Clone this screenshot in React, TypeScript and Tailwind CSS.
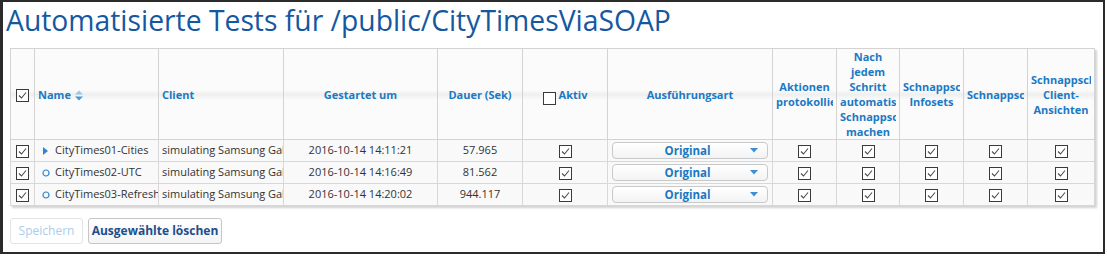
import React from 'react'

const font = { fontFamily: '"Open Sans", "Noto Sans", sans-serif' }

function Check({ checked = true }: { checked?: boolean }) {
  return (
    <svg width="13" height="13" viewBox="0 0 13 13" className="inline-block align-middle">
      <rect x="0.5" y="0.5" width="12" height="12" fill="#fff" stroke="#3a3a3a" />
      {checked && <path d="M3 6.5 L5.5 9 L10 3.5" fill="none" stroke="#4a4a4a" strokeWidth="1.1" />}
    </svg>
  )
}

function SortIcon() {
  return (
    <svg width="8" height="11" viewBox="0 0 8 11" className="inline-block ml-1 align-middle">
      <path d="M0 4.5 L4 0.5 L8 4.5 Z" fill="#9cc6e8" />
      <path d="M0 6.5 L4 10.5 L8 6.5 Z" fill="#4a97d6" />
    </svg>
  )
}

function RunSelect() {
  return (
    <div className="mx-1 flex h-[17px] items-center rounded-[4px] border border-[#c9c9c9] bg-[linear-gradient(to_bottom,#ffffff,#f3f3f3)]">
      <span className="flex-1 pl-3 text-center text-[11.5px] font-bold text-[#1a78c2]">Original</span>
      <svg width="8" height="5" viewBox="0 0 8 5" className="mr-[9px]">
        <path d="M0 0 L8 0 L4 4.5 Z" fill="#3b8fd2" />
      </svg>
    </div>
  )
}

const rows = [
  { name: 'CityTimes01-Cities', icon: 'play', start: '2016-10-14 14:11:21', dur: '57.965' },
  { name: 'CityTimes02-UTC', icon: 'circle', start: '2016-10-14 14:16:49', dur: '81.562' },
  { name: 'CityTimes03-Refresh', icon: 'circle', start: '2016-10-14 14:20:02', dur: '944.117' },
]

const widths = [24, 124, 125, 154, 85, 85, 165, 64, 63, 64, 64, 67]

const th = 'border border-[#d3d3d3] px-[3px] align-middle font-bold text-[11px] leading-[15px] text-[#1b79c4]'
const td = 'border border-[#d8d8d8] align-middle text-[11px] text-[#333] h-[22px] p-0'

function HeadText({ lines }: { lines: string[] }) {
  return (
    <div className="overflow-hidden whitespace-nowrap text-center">
      {lines.map((l, i) => (
        <div key={i}>{l}</div>
      ))}
    </div>
  )
}

export default function App() {
  return (
    <div style={font} className="h-[254px] w-[1105px] border-2 border-l-[3px] border-[#2b2b2b] bg-white pl-[7px]">
      {/* Titel */}
      <h1 className="text-[28.3px] leading-[36px] text-[#14589f] -ml-[4px]">Automatisierte Tests für /public/CityTimesViaSOAP</h1>

      {/* Tabelle */}
      <div className="mt-[10px] w-[1085px] shadow-[2px_2px_2px_rgba(0,0,0,0.18)]">
        <table className="w-[1084px] table-fixed border-collapse bg-[#fafafa]">
          <colgroup>
            {widths.map((w, i) => (
              <col key={i} style={{ width: w }} />
            ))}
          </colgroup>
          <thead>
            <tr className="h-[90px] bg-[linear-gradient(to_bottom,#fbfbfb_0%,#fbfbfb_45%,#efefef_50%,#fbfbfb_56%,#fbfbfb_100%)]">
              <th className={th + ' text-center'}><Check /></th>
              <th className={th + ' text-left'}>Name<SortIcon /></th>
              <th className={th + ' text-left'}>Client</th>
              <th className={th + ' text-center'}>Gestartet um</th>
              <th className={th + ' text-center'}>Dauer (Sek)</th>
              <th className={th + ' text-center'}>
                <span className="inline-flex items-center gap-[3px]">
                  <span className="mt-[6px]"><Check checked={false} /></span>
                  Aktiv
                </span>
              </th>
              <th className={th + ' text-center'}>Ausführungsart</th>
              <th className={th}><HeadText lines={['Aktionen', 'protokollieren']} /></th>
              <th className={th}><HeadText lines={['Nach', 'jedem', 'Schritt', 'automatisch', 'Schnappschuss', 'machen']} /></th>
              <th className={th}><HeadText lines={['Schnappschuss', 'Infosets']} /></th>
              <th className={th}><HeadText lines={['Schnappschuss']} /></th>
              <th className={th}><HeadText lines={['Schnappschuss', 'Client-', 'Ansichten']} /></th>
            </tr>
          </thead>
          <tbody>
            {rows.map(r => (
              <tr key={r.name} className="bg-[#f9f9f9]">
                <td className={td + ' text-center'}><Check /></td>
                <td className={td}>
                  <div className="flex items-center overflow-hidden whitespace-nowrap pl-[7px]">
                    <span className="flex w-[13px] shrink-0 items-center">
                      {r.icon === 'play' ? (
                        <svg width="6" height="8" viewBox="0 0 6 8" className="ml-[1px]">
                          <path d="M0 0 L5 4 L0 8 Z" fill="#2f86cf" />
                        </svg>
                      ) : (
                        <svg width="8" height="8" viewBox="0 0 8 8">
                          <circle cx="4" cy="4" r="3" fill="none" stroke="#2f86cf" strokeWidth="1.2" />
                        </svg>
                      )}
                    </span>
                    {r.name}
                  </div>
                </td>
                <td className={td}>
                  <div className="overflow-hidden whitespace-nowrap pl-[3px]">simulating Samsung Galaxy S7</div>
                </td>
                <td className={td + ' text-center'}>{r.start}</td>
                <td className={td + ' text-center'}>{r.dur}</td>
                <td className={td + ' text-center'}><Check /></td>
                <td className={td}><RunSelect /></td>
                <td className={td + ' text-center'}><Check /></td>
                <td className={td + ' text-center'}><Check /></td>
                <td className={td + ' text-center'}><Check /></td>
                <td className={td + ' text-center'}><Check /></td>
                <td className={td + ' text-center'}><Check /></td>
              </tr>
            ))}
          </tbody>
        </table>
      </div>

      {/* Buttons */}
      <div className="mt-[12px] flex gap-[5px]">
        <button className="h-[26px] w-[73px] rounded-[3px] border border-[#e3e3e3] bg-white text-[12px] text-[#a9cdeb]">
          Speichern
        </button>
        <button className="h-[26px] w-[134px] rounded-[3px] border border-[#c6c6c6] bg-[linear-gradient(to_bottom,#ffffff,#f4f4f4)] text-[12px] font-bold text-[#1c4f8c]">
          Ausgewählte löschen
        </button>
      </div>
    </div>
  )
}
